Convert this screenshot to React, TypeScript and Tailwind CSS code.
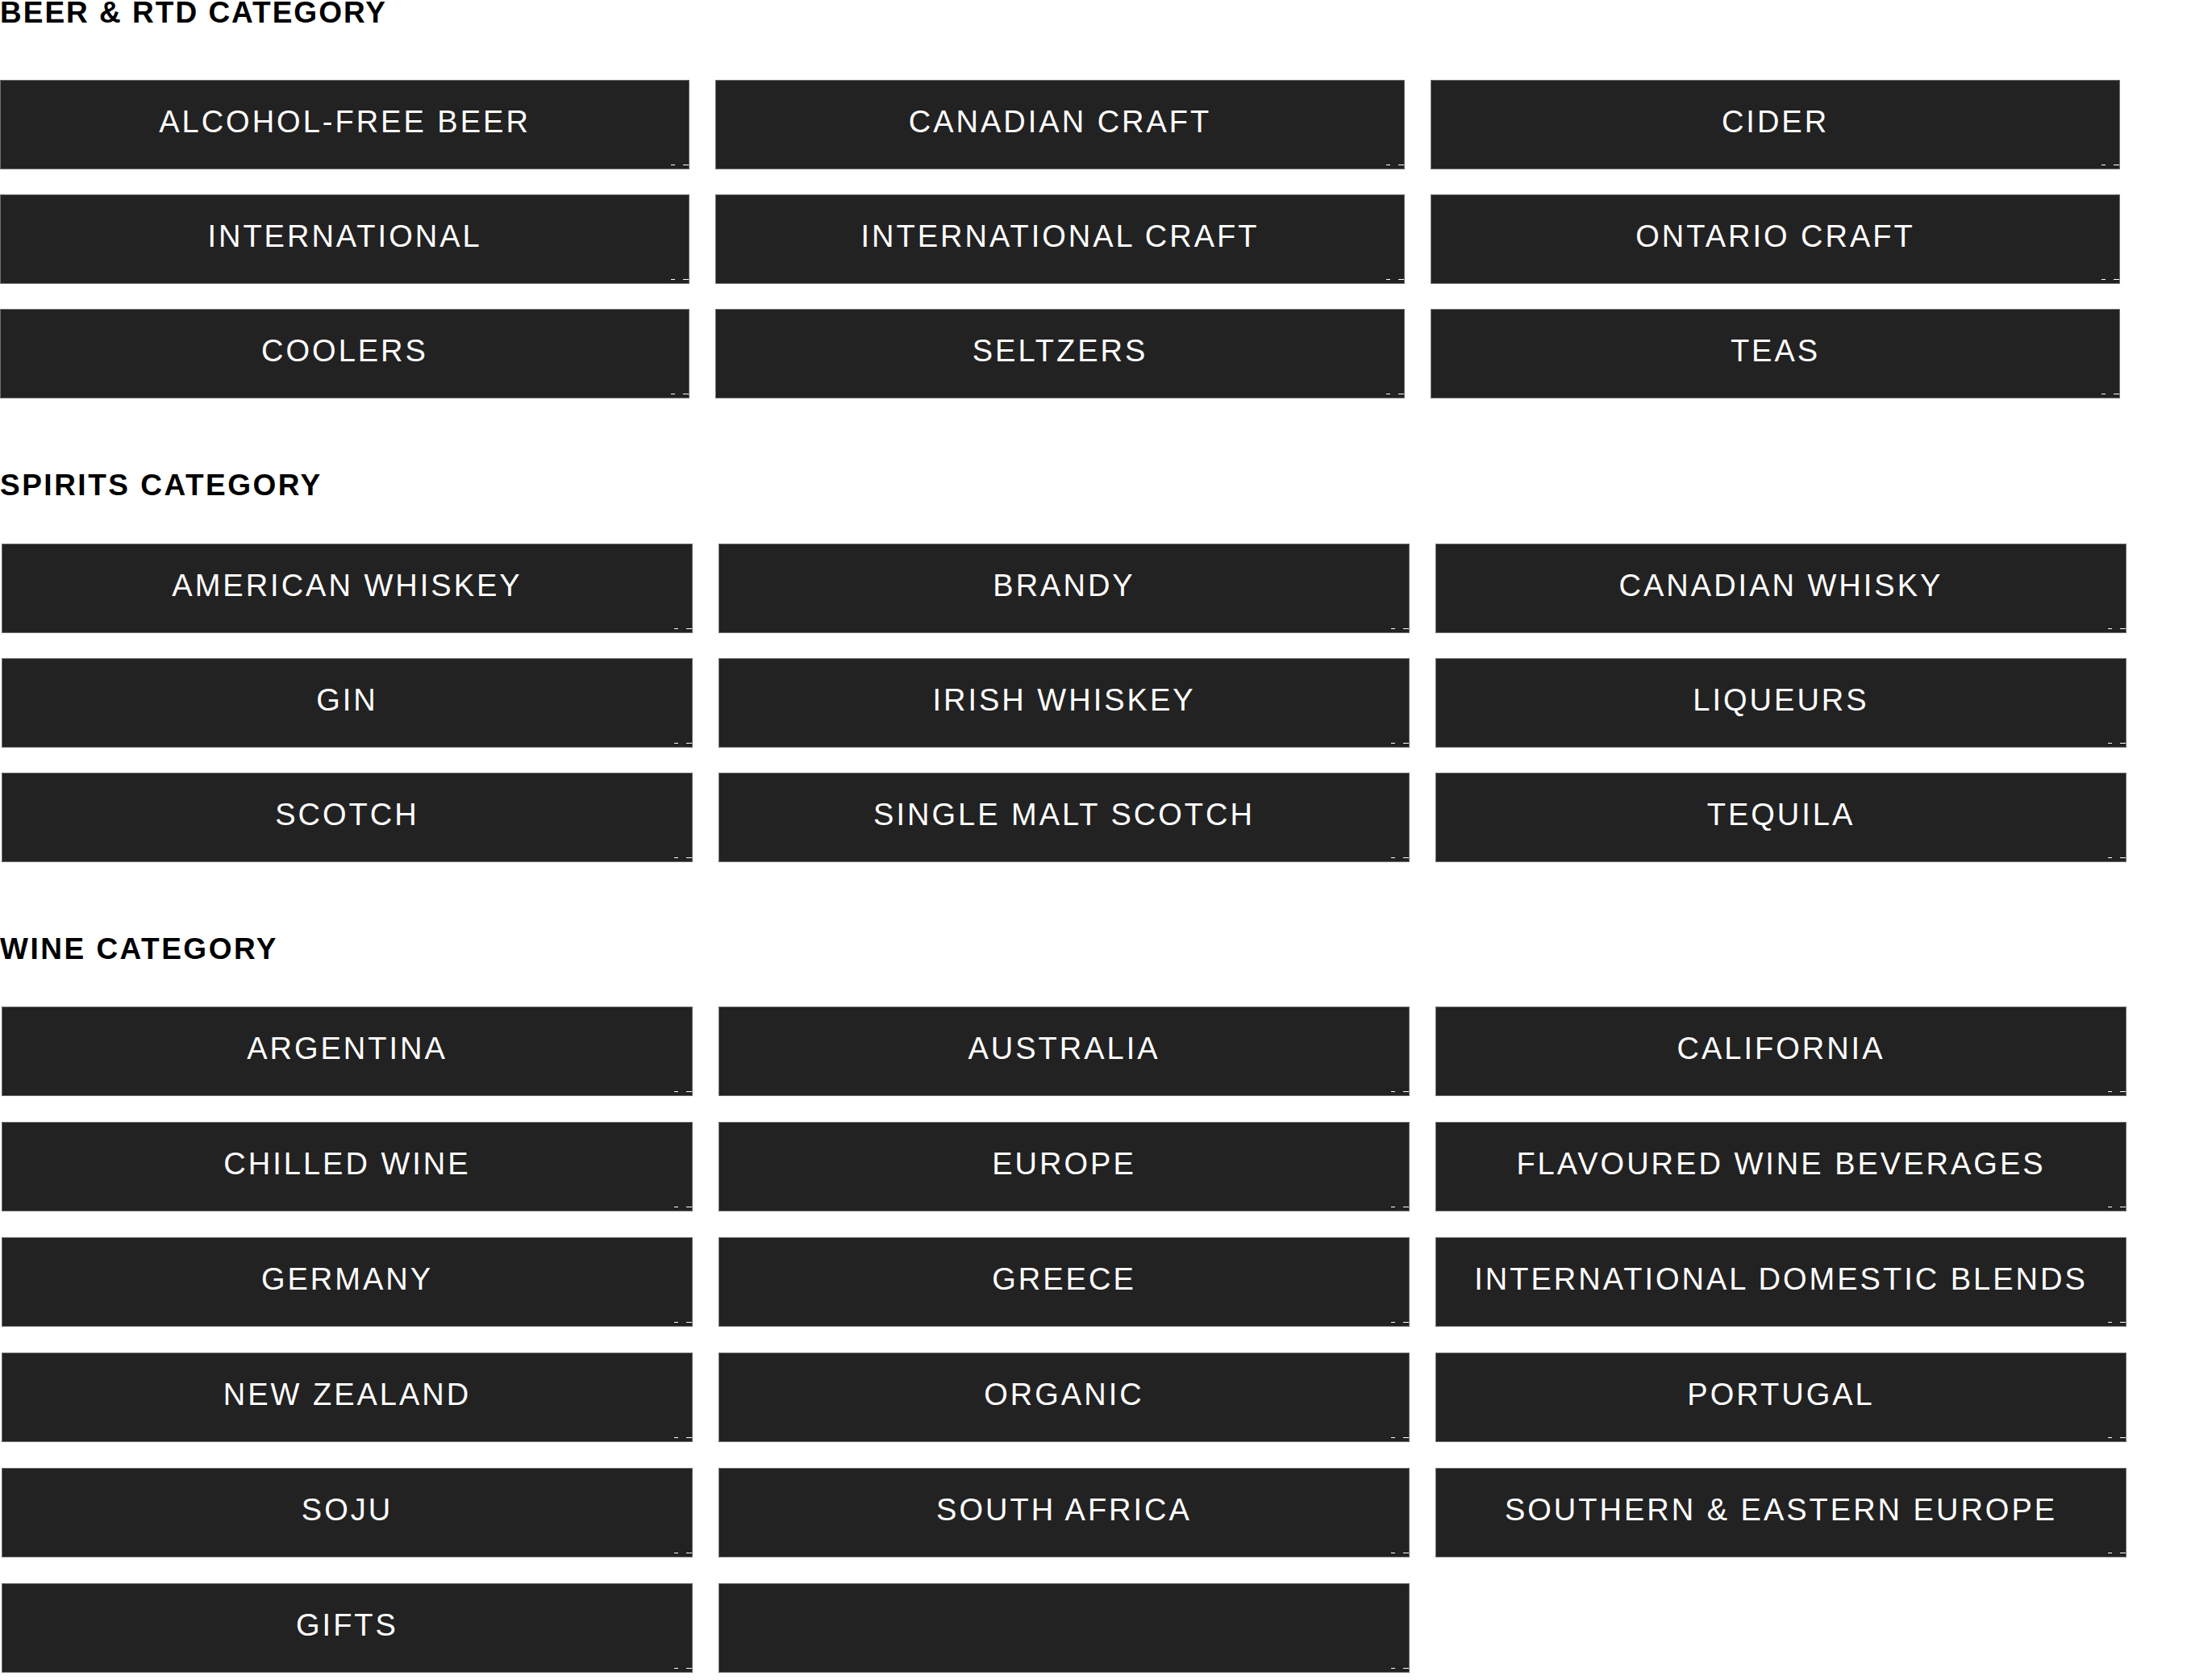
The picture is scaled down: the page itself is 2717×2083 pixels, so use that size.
import React from 'react';

type Section = {
  title: string;
  items: string[];
  headClass: string;
  gridClass: string;
};

const sections: Section[] = [
  {
    title: 'Beer & RTD Category',
    headClass: 'mb-[67px] tracking-[2px]',
    gridClass: 'w-[2629px] gap-y-[31px]',
    items: [
      'Alcohol-Free Beer',
      'Canadian Craft',
      'Cider',
      'International',
      'International Craft',
      'Ontario Craft',
      'Coolers',
      'Seltzers',
      'Teas',
    ],
  },
  {
    title: 'Spirits Category',
    headClass: 'mt-[92px] mb-[56px] tracking-[2.5px]',
    gridClass: 'ml-[2px] w-[2635px] gap-y-[31px]',
    items: [
      'American Whiskey',
      'Brandy',
      'Canadian Whisky',
      'Gin',
      'Irish Whiskey',
      'Liqueurs',
      'Scotch',
      'Single Malt Scotch',
      'Tequila',
    ],
  },
  {
    title: 'Wine Category',
    headClass: 'mt-[92px] mb-[55px] tracking-[2.5px]',
    gridClass: 'ml-[2px] w-[2635px] gap-y-[32px]',
    items: [
      'Argentina',
      'Australia',
      'California',
      'Chilled Wine',
      'Europe',
      'Flavoured Wine Beverages',
      'Germany',
      'Greece',
      'International Domestic Blends',
      'New Zealand',
      'Organic',
      'Portugal',
      'Soju',
      'South Africa',
      'Southern & Eastern Europe',
      'Gifts',
      '',
    ],
  },
];

function CategoryButton({ label }: { label: string }) {
  return (
    <a
      href="#"
      className="relative flex h-[111px] items-center justify-center border border-[#6f6f6f] bg-[#222222] pb-[7px] text-[38px] leading-none tracking-[3px] text-white uppercase"
    >
      <span>{label}</span>
      {/* little marks in the lower right corner */}
      <span className="absolute right-[17px] bottom-[4px] h-px w-[5px] bg-white" />
      <span className="absolute right-0 bottom-[4px] h-px w-[7px] bg-white" />
    </a>
  );
}

export default function App() {
  return (
    <div className="min-h-screen bg-white font-['Liberation_Sans',Arial,sans-serif] text-black">
      {sections.map((section) => (
        <section key={section.title}>
          <h2
            className={`h-[32px] text-[37px] leading-[32px] font-bold uppercase ${section.headClass}`}
          >
            {section.title}
          </h2>
          <div className={`grid grid-cols-3 gap-x-[32px] ${section.gridClass}`}>
            {section.items.map((item, i) => (
              <CategoryButton key={i} label={item} />
            ))}
          </div>
        </section>
      ))}
    </div>
  );
}
